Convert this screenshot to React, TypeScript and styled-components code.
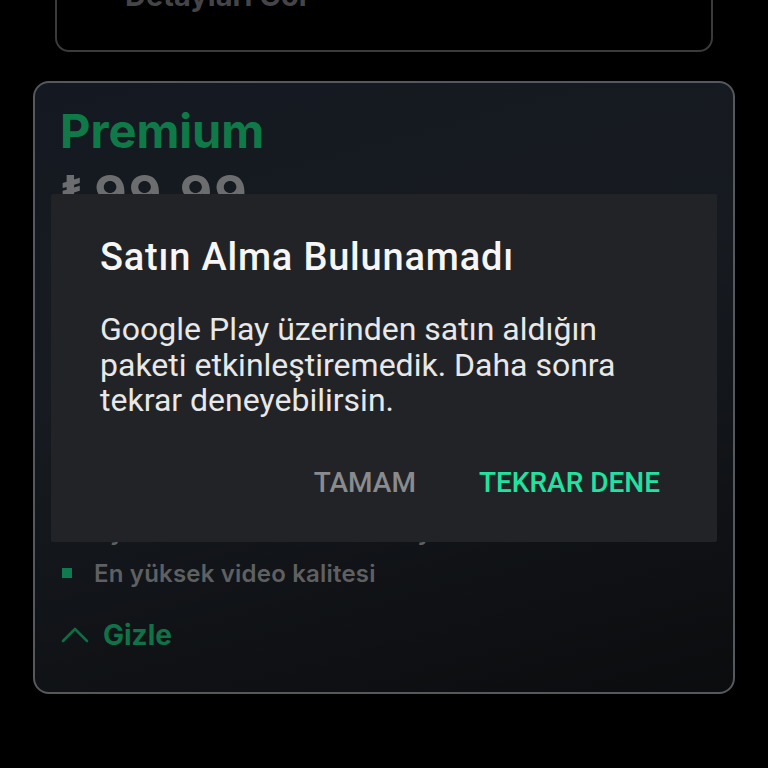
import React from 'react'
import styled, { createGlobalStyle } from 'styled-components'

const features = [
  'Reklamsız izleme deneyimi',
  'Tüm dizi ve filmlere erişim',
  'Aynı anda 4 farklı cihazda oynatma',
  'En yüksek video kalitesi',
]

export default function App() {
  return (
    <>
      <GlobalStyle />
      <Screen>
        <Content>
          <PlanCard>
            <DetailsRow>
              <ChevronDown />
              <DetailsLabel>Detayları Gör</DetailsLabel>
            </DetailsRow>
          </PlanCard>

          <PremiumCard>
            <PlanName>Premium</PlanName>
            <Price>
              ₺99,99<PricePeriod>/ay</PricePeriod>
            </Price>
            <FeatureList>
              {features.map(item => (
                <Feature key={item}>
                  <Bullet />
                  {item}
                </Feature>
              ))}
            </FeatureList>
            <ToggleRow>
              <ChevronUp />
              <span>Gizle</span>
            </ToggleRow>
          </PremiumCard>
        </Content>

        <Overlay>
          <Dialog role="alertdialog">
            <DialogTitle>Satın Alma Bulunamadı</DialogTitle>
            <DialogText>
              Google Play üzerinden satın aldığın paketi etkinleştiremedik. Daha sonra tekrar deneyebilirsin.
            </DialogText>
            <DialogActions>
              <ActionButton>TAMAM</ActionButton>
              <ActionButton $primary>TEKRAR DENE</ActionButton>
            </DialogActions>
          </Dialog>
        </Overlay>
      </Screen>
    </>
  )
}

const ChevronDown = () => (
  <svg width="16" height="16" viewBox="0 0 24 24" fill="none" stroke="#3c3c3c" strokeWidth="3" strokeLinecap="round" strokeLinejoin="round">
    <path d="M5 9l7 7 7-7" />
  </svg>
)

const ChevronUp = () => (
  <svg width="30" height="22" viewBox="0 0 30 22" fill="none" stroke="#0f6d44" strokeWidth="2.6" strokeLinecap="round" strokeLinejoin="round">
    <path d="M3 17L15 5l12 12" />
  </svg>
)

const GlobalStyle = createGlobalStyle`
  html, body {
    margin: 0;
    padding: 0;
    background: #000;
  }
  * {
    box-sizing: border-box;
  }
`

const Screen = styled.div`
  position: relative;
  width: 768px;
  height: 768px;
  overflow: hidden;
  background: #000;
  font-family: Inter, 'Noto Sans', sans-serif;
`

const Content = styled.div`
  display: flex;
  flex-direction: column;
  gap: 29px;
  padding: 0 33px;
  margin-top: -47px;
`

const PlanCard = styled.section`
  margin: 0 22px;
  padding: 24px 24px 39px 32px;
  border: 2px solid #3a3a3c;
  border-radius: 14px;
`

const DetailsRow = styled.div`
  display: flex;
  align-items: center;
  gap: 20px;
  height: 32px;
`

const DetailsLabel = styled.span`
  color: #454547;
  font-size: 29px;
  font-weight: 700;
`

const PremiumCard = styled.section`
  display: flex;
  flex-direction: column;
  height: 613px;
  padding: 22px 25px 39px;
  border: 2px solid #55585c;
  border-radius: 16px;
  background: linear-gradient(165deg, #141820 0%, #171b21 40%, #0b0c0e 100%);
`

const PlanName = styled.h2`
  margin: 0;
  color: #0f7a47;
  font-size: 47px;
  line-height: 52px;
  font-weight: 700;
`

const Price = styled.div`
  margin-top: 10px;
  color: #6c6d6f;
  font-size: 50px;
  line-height: 52px;
  font-weight: 700;
  letter-spacing: 2px;
`

const PricePeriod = styled.span`
  font-size: 20px;
  font-weight: 500;
`

const FeatureList = styled.ul`
  margin: auto 0 0;
  padding: 0;
  list-style: none;
  display: flex;
  flex-direction: column;
`

const Feature = styled.li`
  display: flex;
  align-items: center;
  gap: 22px;
  height: 42px;
  color: #5e6062;
  font-size: 24px;
  font-weight: 600;
  letter-spacing: 0.2px;
`

const Bullet = styled.span`
  width: 10px;
  height: 10px;
  margin-left: 2px;
  background: #0e7a4e;
`

const ToggleRow = styled.div`
  display: flex;
  align-items: center;
  gap: 13px;
  margin-top: 23px;
  height: 36px;
  color: #0f7347;
  font-size: 28px;
  font-weight: 700;
`

const Overlay = styled.div`
  position: absolute;
  inset: 0;
  display: flex;
  justify-content: center;
  align-items: flex-start;
  padding-top: 194px;
`

const Dialog = styled.div`
  display: flex;
  flex-direction: column;
  width: 666px;
  height: 348px;
  padding: 41px 57px 0 49px;
  background: #222327;
  border-radius: 2px;
  font-family: Roboto, 'Noto Sans', sans-serif;
`

const DialogTitle = styled.h1`
  margin: 0;
  color: #f6f6f6;
  font-size: 38px;
  line-height: 44px;
  font-weight: 500;
  letter-spacing: 0.8px;
`

const DialogText = styled.p`
  margin: 33px 0 0;
  color: #e8e8e8;
  font-size: 32px;
  line-height: 35.5px;
  font-weight: 400;
`

const DialogActions = styled.div`
  display: flex;
  justify-content: flex-end;
  gap: 63px;
  margin-top: 46px;
`

const ActionButton = styled.button<{ $primary?: boolean }>`
  padding: 0;
  border: none;
  background: none;
  color: ${p => (p.$primary ? '#20e3a0' : '#8a8b8d')};
  font-family: inherit;
  font-size: 28px;
  line-height: 36px;
  font-weight: 500;
`
